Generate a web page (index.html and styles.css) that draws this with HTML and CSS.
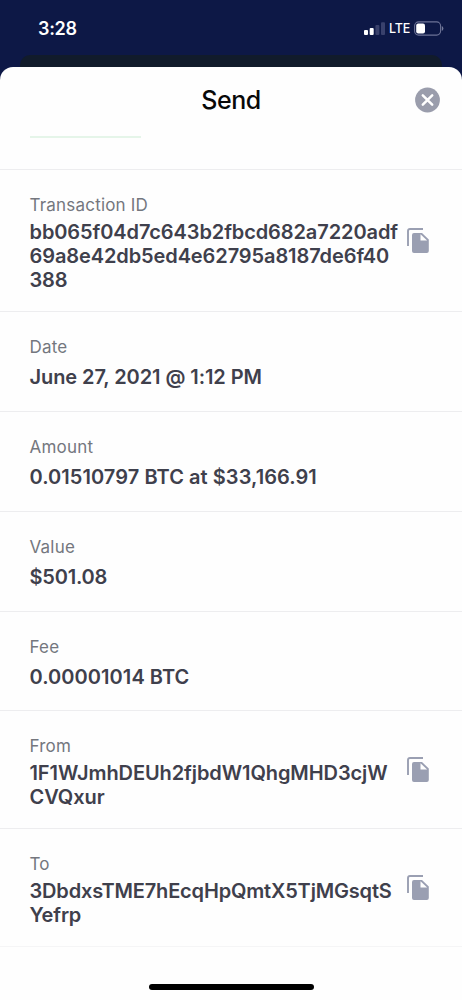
FILE: index.html
```html
<!DOCTYPE html>
<html lang="en">
<head>
<meta charset="utf-8">
<title>Send</title>
<link rel="stylesheet" href="styles.css">
</head>
<body>
<svg class="defs" aria-hidden="true">
  <symbol id="copy" viewBox="0 0 22 25">
    <path d="M16 1H3Q1 1 1 3V18" fill="none" stroke="currentColor" stroke-width="1.9"/>
    <path fill="currentColor" fill-rule="evenodd" d="M7 5H15L21.8 11.5V23Q21.8 25 19.8 25H7Q5 25 5 23V7Q5 5 7 5ZM13.5 6.3V12.5H20.1Z"/>
  </symbol>
</svg>
<div class="screen">
  <header class="status">
    <span class="time">3:28</span>
    <div class="indicators">
      <svg class="signal" width="21" height="13" viewBox="0 0 21 13">
        <rect x="0" y="8" width="4" height="5" rx="1" fill="#fff"/>
        <rect x="5.7" y="6" width="4" height="7" rx="1" fill="#fff"/>
        <rect x="11.4" y="3" width="4" height="10" rx="1" fill="#39416c"/>
        <rect x="17" y="0.3" width="4" height="12.7" rx="1" fill="#39416c"/>
      </svg>
      <span class="network">LTE</span>
      <svg class="battery" width="30" height="15" viewBox="0 0 30 15">
        <rect x="0.6" y="0.9" width="26" height="13.2" rx="4" fill="none" stroke="#6c7296" stroke-width="1.1"/>
        <rect x="2.2" y="2.6" width="8.8" height="9.8" rx="2" fill="#fff"/>
        <path d="M27.8 5V10Q29.4 9.2 29.4 7.5T27.8 5Z" fill="#747a9b"/>
      </svg>
    </div>
  </header>
  <div class="under-card"></div>
  <main class="sheet">
    <div class="title-bar">
      <h1 class="title">Send</h1>
      <svg class="close" width="26" height="26" viewBox="0 0 26 26">
        <circle cx="12.5" cy="13" r="12.4" fill="#9a9dac"/>
        <path d="M7.8 8.3L17.2 17.7M17.2 8.3L7.8 17.7" stroke="#fff" stroke-width="2.5" stroke-linecap="round"/>
      </svg>
    </div>
    <div class="scroll-edge"><div class="green-line"></div></div>
    <section class="row"><div class="label">Transaction ID</div>
      <div class="value long txid">bb065f04d7c643b2fbcd682a7220adf<br>69a8e42db5ed4e62795a8187de6f40<br>388</div>
      <svg class="copy"><use href="#copy"/></svg></section>
    <section class="row"><div class="label">Date</div><div class="value date">June 27, 2021 @ 1:12 PM</div></section>
    <section class="row"><div class="label">Amount</div><div class="value amount">0.01510797 BTC at $33,166.91</div></section>
    <section class="row"><div class="label">Value</div><div class="value price">$501.08</div></section>
    <section class="row fee"><div class="label">Fee</div><div class="value amount">0.00001014 BTC</div></section>
    <section class="row"><div class="label">From</div><div class="value long from">1F1WJmhDEUh2fjbdW1QhgMHD3cjW<br>CVQxur</div>
      <svg class="copy"><use href="#copy"/></svg></section>
    <section class="row last"><div class="label">To</div><div class="value long to">3DbdxsTME7hEcqHpQmtX5TjMGsqtS<br>Yefrp</div>
      <svg class="copy"><use href="#copy"/></svg></section>
    <footer class="home"><div class="home-bar"></div></footer>
  </main>
</div>
</body>
</html>
```
FILE: styles.css
```css
* { box-sizing: border-box; }
body { margin: 0; font-family: Inter, "Liberation Sans", sans-serif; }
.defs { position: absolute; width: 0; height: 0; }
.screen { width: 462px; height: 1000px; overflow: hidden; background: #0d1846; display: flex; flex-direction: column; }
.status { height: 55px; padding: 2px 18px 0 38px; display: flex; align-items: center; justify-content: space-between; color: #fff; }
.time { font-size: 18px; font-weight: 600; letter-spacing: -0.3px; }
.indicators { display: flex; align-items: center; }
.network { font-size: 12.5px; font-weight: 500; letter-spacing: -0.2px; margin: 0 4px 0 4px; width: 21px; }
.under-card { height: 24px; margin: 0 20px -12px; border-radius: 10px 10px 0 0; background: #111b2b; flex: none; }
.sheet { flex: 1; background: #fefefe; border-radius: 13px 13px 0 0; position: relative; }
.title-bar { height: 67px; padding: 0 21px; display: grid; grid-template-columns: 26px 1fr 26px; align-items: center; }
.title { grid-column: 2; margin: 0; text-align: center; font-size: 25px; font-weight: 500; letter-spacing: -0.5px; color: #080808; line-height: 30px; }
.scroll-edge { height: 36px; padding: 2px 30px 0; border-bottom: 1px solid #ededef; }
.green-line { width: 111px; height: 2px; background: #e5f5e9; }
.row { position: relative; padding: 25px 29.5px 19px; border-bottom: 1px solid #ededef; }
.row.fee { padding-bottom: 18.5px; }
.row.last { border-bottom-color: #f5f5f6; }
.label { font-size: 17px; line-height: 20px; letter-spacing: 0.2px; color: #74777e; margin-bottom: 5px; }
.value { font-size: 20px; line-height: 30px; font-weight: 600; color: #3f404c; white-space: nowrap; }
.long { line-height: 24px; }
.txid { letter-spacing: -0.1px; }
.date { letter-spacing: -0.08px; }
.amount { letter-spacing: 0.06px; }
.price { letter-spacing: -0.2px; }
.from { letter-spacing: -0.09px; }
.to { letter-spacing: -0.17px; }
.copy { position: absolute; right: 33px; top: 50%; width: 22px; height: 25px; margin-top: -12.5px; color: #9a9fb2; }
.home { height: 53px; display: flex; justify-content: center; padding-top: 37px; }
.home-bar { width: 165px; height: 6px; border-radius: 3px; background: #000; }
```
